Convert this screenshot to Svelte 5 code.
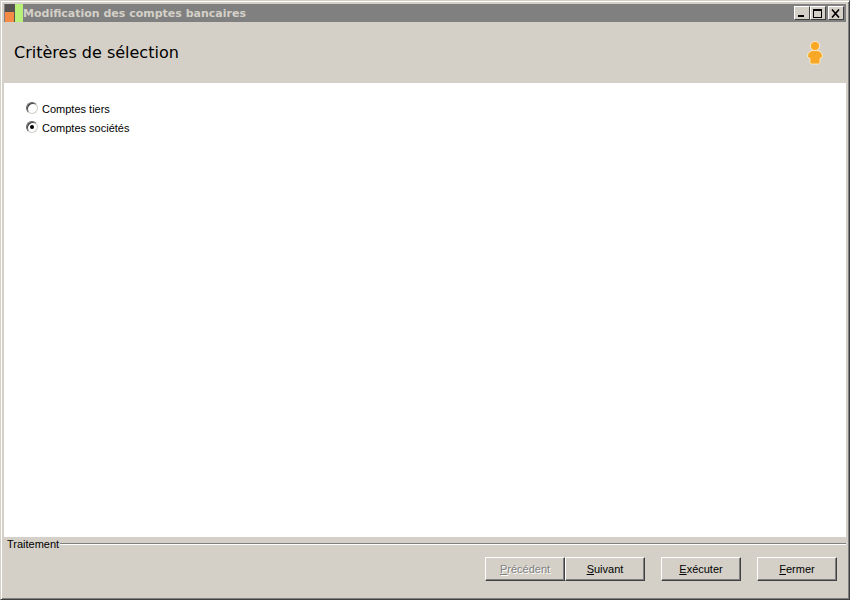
<script>
  let choice = 'societes';

  const buttons = [
    { key: 'P', rest: 'récédent', disabled: true },
    { key: 'S', rest: 'uivant' },
    { key: 'E', rest: 'xécuter', gap: true },
    { key: 'F', rest: 'ermer', gap: true }
  ];
</script>

<div class="window">
  <div class="titlebar">
    <svg class="app-icon" width="18" height="18" viewBox="0 0 18 18">
      <rect x="0" y="0" width="10" height="18" fill="#55524f" />
      <rect x="0" y="8" width="9" height="10" fill="#f58a45" />
      <rect x="10" y="0" width="8" height="18" fill="#b8f07a" />
    </svg>
    <span class="title">Modification des comptes bancaires</span>
    <div class="caption-buttons">
      <button class="caption" aria-label="Réduire">
        <svg width="10" height="9" viewBox="0 0 10 9"><rect x="1" y="6" width="6" height="2" fill="#000" /></svg>
      </button>
      <button class="caption" aria-label="Agrandir">
        <svg width="10" height="9" viewBox="0 0 10 9"><path d="M0 0h9v9H0z M1 2v6h7V2z" fill="#000" fill-rule="evenodd" /></svg>
      </button>
      <button class="caption close" aria-label="Fermer">
        <svg width="10" height="9" viewBox="0 0 10 9"><path d="M1 0.5l7 8M8 0.5l-7 8" stroke="#000" stroke-width="1.6" fill="none" /></svg>
      </button>
    </div>
  </div>

  <header class="header">
    <h1>Critères de sélection</h1>
    <svg class="user-icon" width="18" height="24" viewBox="0 0 18 24">
      <circle cx="9" cy="5" r="4.6" fill="#f9a825" stroke="#fff3d6" stroke-width="0.8" />
      <path d="M4 10.5c1.500-1.500 8.500-1.500 10 0c1.500 1 2.500 3 2.500 5.500l-2.500 1.500v4c0 1-1 1.500-2 1.500h-6c-1 0-2-.5-2-1.500v-4l-2.500-1.500c0-2.500 1-4.500 2.500-5.500z" fill="#f9a825" stroke="#fff3d6" stroke-width="0.8" />
    </svg>
  </header>

  <main class="content">
    <label class="radio">
      <input type="radio" bind:group={choice} value="tiers" />
      <span class="mark"></span>
      Comptes tiers
    </label>
    <label class="radio">
      <input type="radio" bind:group={choice} value="societes" />
      <span class="mark"></span>
      Comptes sociétés
    </label>
  </main>

  <footer class="footer">
    <div class="legend">
      <span>Traitement</span>
      <div class="rule"></div>
    </div>
    <div class="actions">
      {#each buttons as b}
        <button class="btn" class:gap={b.gap} disabled={b.disabled}><u>{b.key}</u>{b.rest}</button>
      {/each}
    </div>
  </footer>
</div>

<style>
  :global(body) {
    background: #d4d0c8;
  }

  .window {
    box-sizing: border-box;
    width: 850px;
    height: 600px;
    display: flex;
    flex-direction: column;
    background: #d4d0c8;
    border: 1px solid;
    border-color: #d4d0c8 #404040 #404040 #d4d0c8;
    box-shadow: inset 1px 1px 0 #fff, inset -1px -1px 0 #808080;
    padding: 3px;
    font-family: "Liberation Sans", Arial, sans-serif;
    font-size: 11px;
    color: #000;
  }

  .titlebar {
    height: 18px;
    flex: none;
    display: flex;
    align-items: center;
    background: #808080;
  }

  .app-icon {
    flex: none;
    margin-left: 1px;
  }

  .title {
    margin-left: 0;
    font-family: "DejaVu Sans", Verdana, sans-serif;
    font-weight: bold;
    font-size: 11px;
    color: #d4d0c8;
  }

  .caption-buttons {
    margin-left: auto;
    margin-right: 2px;
    display: flex;
  }

  .caption {
    box-sizing: border-box;
    width: 16px;
    height: 14px;
    padding: 0;
    display: flex;
    align-items: center;
    justify-content: center;
    background: #d4d0c8;
    border: 1px solid;
    border-color: #fff #404040 #404040 #fff;
  }

  .close {
    margin-left: 2px;
  }

  .header {
    height: 61px;
    flex: none;
    display: flex;
    align-items: center;
    justify-content: space-between;
    padding: 0 22px 0 10px;
  }

  h1 {
    margin: 0;
    font-family: "DejaVu Sans", Verdana, sans-serif;
    font-weight: normal;
    font-size: 16px;
    color: #000;
  }

  .content {
    flex: 1;
    background: #fff;
    padding: 18px 0 0 22px;
    display: flex;
    flex-direction: column;
    gap: 3px;
  }

  .radio {
    height: 16px;
    display: flex;
    align-items: center;
    gap: 4px;
  }

  .radio input {
    position: absolute;
    opacity: 0;
    width: 0;
    height: 0;
  }

  .mark {
    box-sizing: border-box;
    width: 12px;
    height: 12px;
    margin-top: -3px;
    border-radius: 50%;
    background: #fff;
    border: 1px solid #666;
    border-right-color: #d4d0c8;
    border-bottom-color: #d4d0c8;
    box-shadow: inset 1px 1px 0 #404040;
    display: flex;
    align-items: center;
    justify-content: center;
  }

  .radio input:checked + .mark::after {
    content: '';
    width: 4px;
    height: 4px;
    border-radius: 50%;
    background: #000;
  }

  .footer {
    height: 59px;
    flex: none;
    display: flex;
    flex-direction: column;
  }

  .legend {
    height: 14px;
    display: flex;
    align-items: center;
    padding-left: 3px;
  }

  .rule {
    flex: 1;
    height: 0;
    margin-left: 1px;
    border-top: 1px solid #808080;
    border-bottom: 1px solid #fff;
  }

  .actions {
    display: flex;
    justify-content: flex-end;
    padding: 6px 9px 0 0;
  }

  .btn {
    box-sizing: border-box;
    width: 80px;
    height: 24px;
    padding: 0;
    font-family: "Liberation Sans", Arial, sans-serif;
    font-size: 11px;
    color: #000;
    background: #d4d0c8;
    border: 1px solid;
    border-color: #fff #404040 #404040 #fff;
    box-shadow: inset -1px -1px 0 #808080;
  }

  .btn.gap {
    margin-left: 16px;
  }

  .btn:disabled {
    color: #808080;
    text-shadow: 1px 1px 0 #fff;
  }
</style>
